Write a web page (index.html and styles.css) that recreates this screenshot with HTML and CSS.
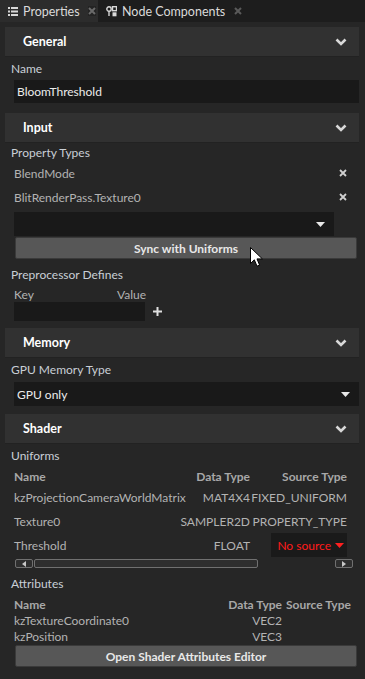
FILE: index.html
```html
<!DOCTYPE html>
<html>
<head>
<meta charset="utf-8">
<link rel="stylesheet" href="styles.css">
</head>
<body>
<div class="tabs">
  <div class="tab active">
    <svg class="tab-icon" width="10" height="9" viewBox="0 0 10 9"><rect x="0" y="0" width="2" height="2" fill="#d8d8d8"/><rect x="3" y="0" width="7" height="2" fill="#d8d8d8"/><rect x="0" y="3.5" width="2" height="2" fill="#d8d8d8"/><rect x="3" y="3.5" width="7" height="2" fill="#d8d8d8"/><rect x="0" y="7" width="2" height="2" fill="#d8d8d8"/><rect x="3" y="7" width="7" height="2" fill="#d8d8d8"/></svg>
    <span class="tab-label">Properties</span>
    <span class="tab-close boxed"><svg width="8" height="8" viewBox="0 0 8 8"><path d="M1 1L7 7M7 1L1 7" stroke="#6a6a6a" stroke-width="2"/></svg></span>
  </div>
  <div class="tab">
    <svg class="tab-icon" width="11" height="11" viewBox="0 0 11 11"><circle cx="3" cy="3" r="2.2" fill="none" stroke="#d8d8d8" stroke-width="1.4"/><rect x="2.3" y="5" width="1.4" height="5" fill="#d8d8d8"/><rect x="6.5" y="0.7" width="4" height="4" fill="none" stroke="#d8d8d8" stroke-width="1.4"/><rect x="6.5" y="6.3" width="4" height="4" fill="#d8d8d8"/></svg>
    <span class="tab-label">Node Components</span>
    <span class="tab-close"><svg width="8" height="8" viewBox="0 0 8 8"><path d="M1 1L7 7M7 1L1 7" stroke="#5a5a5a" stroke-width="2"/></svg></span>
  </div>
</div>

<div class="panel">
  <section class="section general">
    <div class="section-header"><span>General</span><svg class="chev" width="12" height="8" viewBox="0 0 12 8"><path d="M1.5 1.5L6 6L10.5 1.5" fill="none" stroke="#d8d8d8" stroke-width="2.6"/></svg></div>
    <div class="label">Name</div>
    <div class="field text">BloomThreshold</div>
  </section>

  <section class="section input">
    <div class="section-header"><span>Input</span><svg class="chev" width="12" height="8" viewBox="0 0 12 8"><path d="M1.5 1.5L6 6L10.5 1.5" fill="none" stroke="#d8d8d8" stroke-width="2.6"/></svg></div>
    <div class="label tight">Property Types</div>
    <div class="list-row"><span>BlendMode</span><svg width="8" height="8" viewBox="0 0 8 8"><path d="M1 1L7 7M7 1L1 7" stroke="#d0d0d0" stroke-width="1.8"/></svg></div>
    <div class="list-row"><span>BlitRenderPass.Texture0</span><svg width="8" height="8" viewBox="0 0 8 8"><path d="M1 1L7 7M7 1L1 7" stroke="#d0d0d0" stroke-width="1.8"/></svg></div>
    <div class="field combo short"><span></span><svg width="9" height="5" viewBox="0 0 9 5"><path d="M0 0H9L4.5 5Z" fill="#e8e8e8"/></svg></div>
    <div class="button">Sync with Uniforms</div>
    <div class="label pre">Preprocessor Defines</div>
    <div class="kv-head"><span>Key</span><span>Value</span></div>
    <div class="kv-row"><div class="field kv"></div><svg width="9" height="9" viewBox="0 0 9 9"><path d="M4.5 0V9M0 4.5H9" stroke="#e0e0e0" stroke-width="2"/></svg></div>
  </section>

  <section class="section memory">
    <div class="section-header"><span>Memory</span><svg class="chev" width="12" height="8" viewBox="0 0 12 8"><path d="M1.5 1.5L6 6L10.5 1.5" fill="none" stroke="#d8d8d8" stroke-width="2.6"/></svg></div>
    <div class="label">GPU Memory Type</div>
    <div class="field combo wide">GPU only<svg width="9" height="5" viewBox="0 0 9 5"><path d="M0 0H9L4.5 5Z" fill="#e8e8e8"/></svg></div>
  </section>

  <section class="section shader">
    <div class="section-header"><span>Shader</span><svg class="chev" width="12" height="8" viewBox="0 0 12 8"><path d="M1.5 1.5L6 6L10.5 1.5" fill="none" stroke="#d8d8d8" stroke-width="2.6"/></svg></div>
    <div class="label">Uniforms</div>
    <div class="utable">
      <div class="urow head"><span>Name</span><span class="r">Data Type</span><span class="r">Source Type</span></div>
      <div class="urow"><span>kzProjectionCameraWorldMatrix</span><span class="r">MAT4X4</span><span class="r">FIXED_UNIFORM</span></div>
      <div class="urow"><span>Texture0</span><span class="r">SAMPLER2D</span><span class="r">PROPERTY_TYPE</span></div>
      <div class="urow"><span>Threshold</span><span class="r">FLOAT</span><span class="nosrc">No source <svg width="9" height="5" viewBox="0 0 9 5"><path d="M0 0H9L4.5 5Z" fill="#ff2020"/></svg></span></div>
    </div>
    <div class="scrollbar">
      <div class="sb-btn"><svg width="4" height="6" viewBox="0 0 4 6"><path d="M4 0V6L0 3Z" fill="#c8c8c8"/></svg></div>
      <div class="sb-thumb"></div>
      <div class="sb-track"></div>
      <div class="sb-btn"><svg width="4" height="6" viewBox="0 0 4 6"><path d="M0 0V6L4 3Z" fill="#c8c8c8"/></svg></div>
    </div>
    <div class="label attr">Attributes</div>
    <div class="atable">
      <div class="arow head"><span>Name</span><span class="r">Data Type</span><span class="src">Source Type</span></div>
      <div class="arow"><span>kzTextureCoordinate0</span><span class="r">VEC2</span><span></span></div>
      <div class="arow"><span>kzPosition</span><span class="r">VEC3</span><span></span></div>
    </div>
    <div class="button">Open Shader Attributes Editor</div>
  </section>
</div>

<svg class="cursor" width="14" height="21" viewBox="0 0 14 21"><path d="M0.5 0.5V16.5L4.3 12.8L7 19.2L9.6 18.1L7 11.9H12.4Z" fill="#ffffff" stroke="#000000" stroke-width="1"/></svg>
</body>
</html>
```

FILE: styles.css
```css
html, body {
  margin: 0;
  padding: 0;
}
body {
  width: 365px;
  height: 679px;
  overflow: hidden;
  background: #262626;
  font-family: "Lato", "Noto Sans", sans-serif;
  font-size: 12px;
  color: #d4d4d4;
  position: relative;
  white-space: nowrap;
}
.tabs {
  height: 22px;
  background: #1d1d1d;
  display: flex;
  align-items: stretch;
}
.tab {
  display: flex;
  align-items: center;
  padding: 0 6px 0 8px;
  color: #dadada;
  font-size: 12.5px;
}
.tab.active {
  background: #2c2c2c;
  width: 98px;
  box-sizing: border-box;
}
.tab-icon {
  margin-right: 5px;
  flex: none;
}
.tab-close {
  margin-left: 8px;
  width: 10px;
  height: 10px;
  display: flex;
  align-items: center;
  justify-content: center;
}
.tab-close.boxed {
  background: #232323;
}
.panel {
  padding: 0 6px 0 5px;
}
.section-header {
  height: 30px;
  box-sizing: border-box;
  background: #313131;
  border-bottom: 1px solid #222222;
  display: flex;
  align-items: center;
  justify-content: space-between;
  padding: 0 12px 0 18px;
  font-weight: 700;
  font-size: 12.5px;
  color: #ffffff;
}
.general .section-header { margin-top: 5px; }
.input .section-header { margin-top: 10px; }
.memory .section-header { margin-top: 7px; }
.shader .section-header { margin-top: 8px; }
.label {
  height: 16px;
  line-height: 16px;
  margin: 4px 0 0 6px;
  color: #c9cfd6;
}
.label.tight {
  margin-top: 2px;
}
.field {
  margin: 3px 0 0 9px;
  height: 23px;
  box-sizing: border-box;
  background: #191919;
  padding: 0 3px;
  display: flex;
  align-items: center;
  color: #ececec;
}
.combo {
  justify-content: space-between;
  height: 24px;
  padding-right: 9px;
}
.combo.wide {
  margin-top: 4px;
}
.combo.short {
  margin-top: 3px;
  margin-right: 25px;
}
.list-row {
  height: 24px;
  margin-left: 9px;
  margin-right: 12px;
  display: flex;
  align-items: center;
  justify-content: space-between;
  color: #b3b3b3;
}
.button {
  margin: 1px 2px 0 10px;
  height: 22px;
  box-sizing: border-box;
  background: #575757;
  border: 1px solid #3a3a3a;
  border-radius: 2px;
  display: flex;
  align-items: center;
  justify-content: center;
  font-weight: 700;
  color: #e8e8e8;
}
.label.pre {
  margin-top: 8px;
}
.kv-head {
  margin: 5px 0 0 9px;
  width: 132px;
  height: 14px;
  line-height: 14px;
  display: flex;
  justify-content: space-between;
  color: #b3b3b3;
}
.kv-row {
  display: flex;
  align-items: center;
}
.field.kv {
  margin-top: 0;
  width: 131px;
  height: 19px;
}
.kv-row svg {
  margin-left: 8px;
}
.utable {
  margin: 0 12px 0 9px;
}
.urow {
  display: grid;
  grid-template-columns: minmax(0, 1fr) 90px 97px;
  align-items: center;
  height: 24px;
  color: #b3b3b3;
}
.urow.head {
  height: 17px;
  margin-top: 4px;
  font-weight: 700;
  color: #a8a8a8;
}
.urow .r {
  text-align: right;
}
.nosrc {
  justify-self: end;
  height: 24px;
  width: 76px;
  box-sizing: border-box;
  background: #1a1a1a;
  color: #ff1a1a;
  display: flex;
  align-items: center;
  justify-content: flex-end;
  gap: 4px;
  padding-right: 3px;
}
.scrollbar {
  margin: 2px 6px 0 10px;
  height: 9px;
  display: flex;
  gap: 1px;
}
.sb-btn {
  width: 18px;
  height: 9px;
  box-sizing: border-box;
  border: 1px solid #707070;
  border-radius: 2px;
  background: #2e2e2e;
  display: flex;
  align-items: center;
  justify-content: center;
}
.sb-thumb {
  width: 224px;
  box-sizing: border-box;
  border: 1px solid #707070;
  border-radius: 2px;
  background: #2e2e2e;
}
.sb-track {
  flex: 1;
}
.label.attr {
  margin-top: 8px;
}
.atable {
  margin: 0 5px 0 9px;
}
.arow {
  display: grid;
  grid-template-columns: minmax(0, 1fr) 60px 72px;
  align-items: center;
  height: 16px;
  color: #b3b3b3;
}
.arow.head {
  margin-top: 4px;
  font-weight: 700;
  color: #a8a8a8;
}
.arow .r {
  text-align: right;
}
.arow .src {
  padding-left: 4px;
}
.atable + .button {
  margin-top: 1px;
}
.cursor {
  position: absolute;
  left: 250px;
  top: 247px;
}
```
